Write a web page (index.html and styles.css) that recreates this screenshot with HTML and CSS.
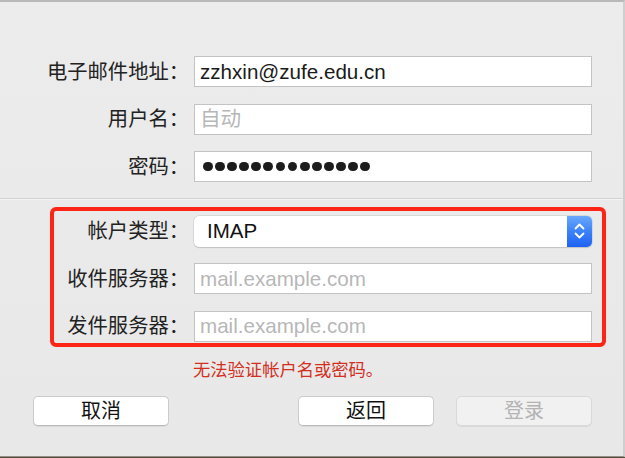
FILE: index.html
```html
<!DOCTYPE html>
<html lang="zh-CN">
<head>
    <meta charset="UTF-8">
    <title>添加帐户</title>
    <link rel="stylesheet" href="styles.css">
</head>
<body>

    <div class="sheet">

        <div class="fields">
            <label class="field-label" for="email">电子邮件地址：</label>
            <input type="text" id="email" class="textbox" value="zzhxin@zufe.edu.cn">

            <label class="field-label" for="username">用户名：</label>
            <input type="text" id="username" class="textbox" placeholder="自动">

            <label class="field-label">密码：</label>
            <div class="textbox password">
                <span></span><span></span><span></span><span></span><span></span><span></span><span></span>
                <span></span><span></span><span></span><span></span><span></span><span></span><span></span>
            </div>
        </div>

        <hr class="divider">

        <div class="fields server-group">
            <label class="field-label">帐户类型：</label>
            <div class="popup">
                <span class="popup-value">IMAP</span>
                <span class="stepper">
                    <svg width="13" height="20" viewBox="0 0 13 20">
                        <path d="M2.5 7.5 L6.5 3.5 L10.5 7.5 M2.5 12.5 L6.5 16.5 L10.5 12.5" fill="none" stroke="#fff" stroke-width="1.8" stroke-linecap="round" stroke-linejoin="round"/>
                    </svg>
                </span>
            </div>

            <label class="field-label" for="incoming">收件服务器：</label>
            <input type="text" id="incoming" class="textbox" placeholder="mail.example.com">

            <label class="field-label" for="outgoing">发件服务器：</label>
            <input type="text" id="outgoing" class="textbox" placeholder="mail.example.com">
        </div>

        <p class="error">无法验证帐户名或密码。</p>

        <div class="buttons">
            <button type="button" class="btn">取消</button>
            <button type="button" class="btn btn-back">返回</button>
            <button type="button" class="btn" disabled>登录</button>
        </div>

    </div>

</body>
</html>
```

FILE: styles.css
```css
html {
    box-sizing: border-box;
}

*,
*:before,
*:after {
    box-sizing: inherit;
}

body {
    margin: 0;
    background: #5c4a30;
    font-family: "Liberation Sans", "Noto Sans CJK SC", sans-serif;
    color: #1e1e1e;
}

.sheet {
    height: 457px;
    padding-top: 54px;
    background: linear-gradient(180deg, #ececec 0%, #e8e8e8 100%);
    border-top: 2px solid #b9b9b9;
    border-right: 2px solid #cfcfcf;
    border-bottom: 1px solid #8f8f8f;
}

.fields {
    display: grid;
    grid-template-columns: 189px 398px;
    column-gap: 5px;
    row-gap: 16.5px;
    align-items: center;
}

.field-label {
    font-size: 20.3px;
    line-height: 24px;
    text-align: right;
    color: #222;
}

.textbox {
    height: 31px;
    margin: 0;
    padding: 0 5px;
    font-family: "Liberation Sans", "Noto Sans CJK SC", sans-serif;
    font-size: 20.6px;
    color: #1a1a1a;
    background: #fff;
    border: 1px solid #c3c3c3;
    border-radius: 0;
    outline: 0;
}

.textbox::placeholder {
    color: #b7b7b7;
}

.password {
    display: flex;
    align-items: center;
    gap: 2.3px;
    padding-left: 8px;
}

.password span {
    width: 9.8px;
    height: 9.8px;
    border-radius: 50%;
    background: #1c1c1c;
}

.divider {
    margin: 15.5px 0 16px;
    border: 0;
    border-top: 1px solid #d3d3d3;
    border-bottom: 1px solid #f4f4f4;
}

.server-group {
    position: relative;
}

/* annotation frame drawn over the server settings */
.server-group:after {
    content: "";
    position: absolute;
    top: -9px;
    left: 50px;
    width: 556px;
    height: 140px;
    border: 4px solid #fd2516;
    border-radius: 6px;
    pointer-events: none;
}

.popup {
    display: flex;
    align-items: center;
    height: 31px;
    background: #fff;
    border-radius: 5px;
    box-shadow: 0 0 0 0.5px #c6c6c6, 0 1px 1px rgba(0, 0, 0, .18);
    overflow: hidden;
}

.popup-value {
    flex: 1;
    padding-left: 13px;
    font-size: 20.5px;
    color: #111;
}

.stepper {
    display: flex;
    align-items: center;
    justify-content: center;
    width: 25px;
    height: 100%;
    background: linear-gradient(180deg, #69a8fd 0%, #3b82f8 50%, #1e62f2 100%);
}

.stepper svg {
    display: block;
}

.error {
    margin: 18px 0 0 193px;
    font-size: 17.3px;
    line-height: 20px;
    color: #d1301f;
}

.buttons {
    display: flex;
    gap: 22px;
    margin-top: 16px;
    padding: 0 31px 0 33px;
}

.btn {
    width: 136px;
    height: 30px;
    padding: 0;
    font-family: "Liberation Sans", "Noto Sans CJK SC", sans-serif;
    font-size: 20px;
    line-height: 28px;
    color: #111;
    background: #fff;
    border: 1px solid #cbcbcb;
    border-bottom-color: #b9b9b9;
    border-radius: 5px;
    box-shadow: 0 1px 0 rgba(0, 0, 0, .06);
}

.btn-back {
    margin-left: auto;
}

.btn:disabled {
    color: #b3b3b3;
    background: #f1f1f1;
    border-color: #d9d9d9;
}
```
